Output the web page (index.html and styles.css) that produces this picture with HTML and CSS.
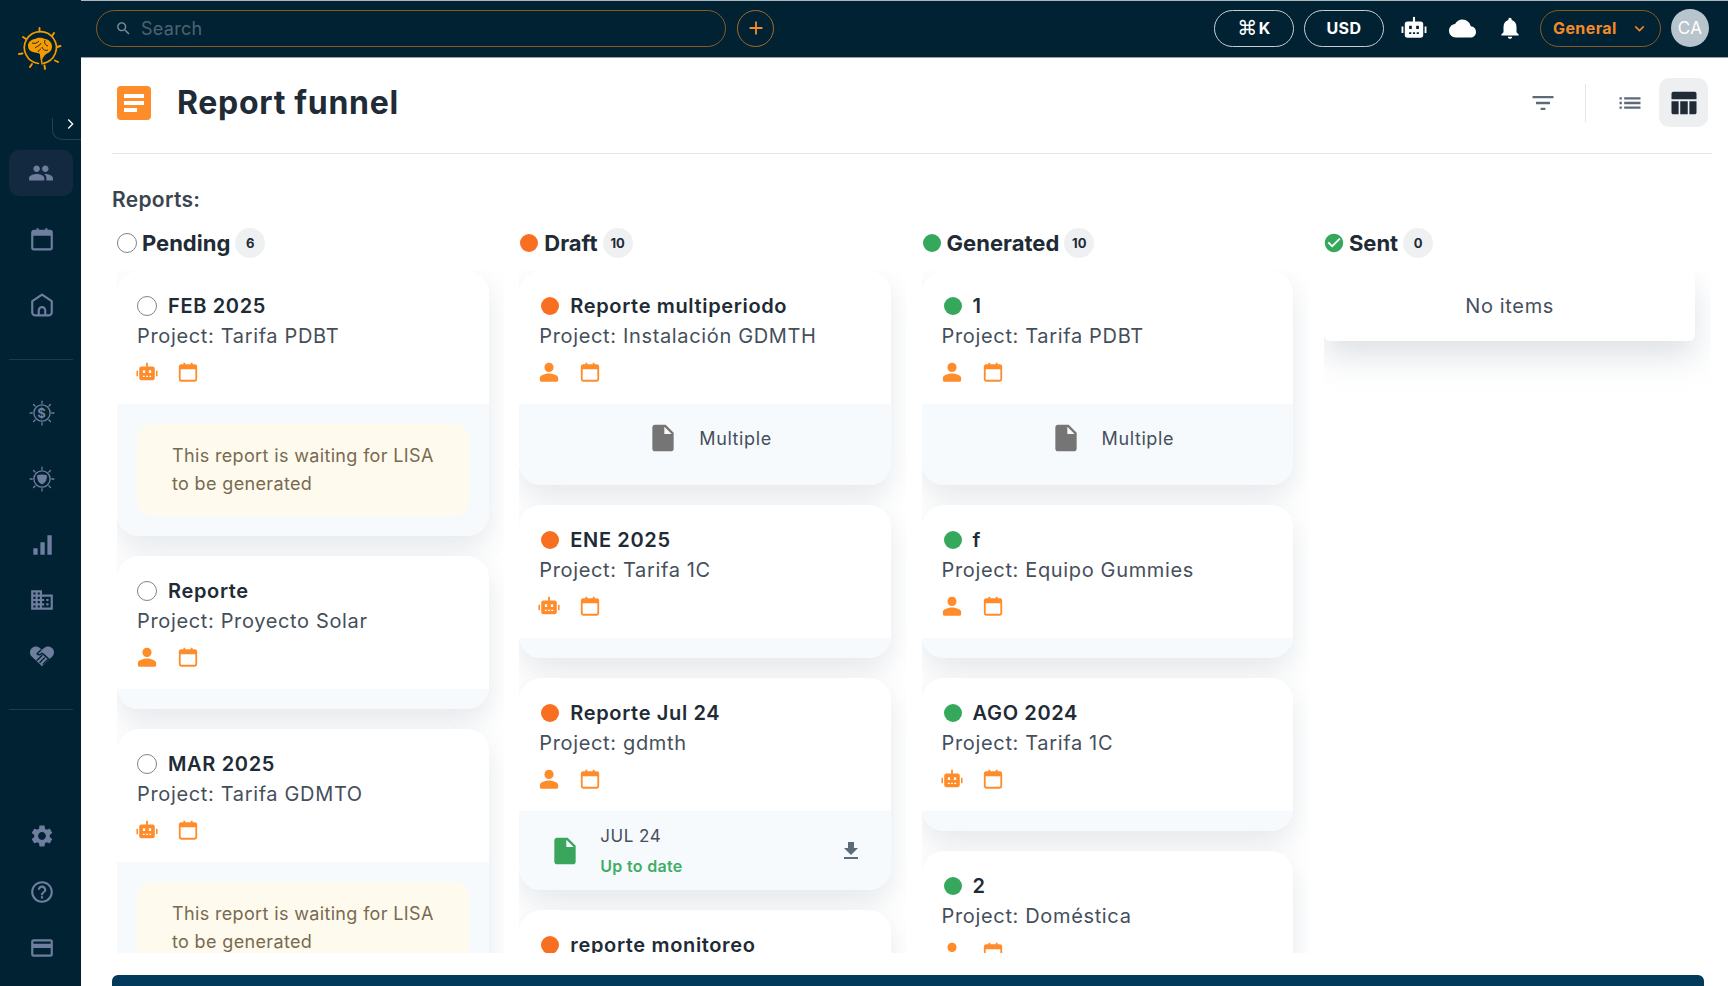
FILE: index.html
```html
<!DOCTYPE html>
<html lang="en">
<head>
<meta charset="utf-8">
<title>Report funnel</title>
<link rel="stylesheet" href="styles.css">
</head>
<body>
<svg class="defs" width="0" height="0" aria-hidden="true">
  <symbol id="i-people" viewBox="0 0 24 24"><path d="M16 11c1.66 0 2.99-1.34 2.99-3S17.66 5 16 5c-1.66 0-3 1.34-3 3s1.34 3 3 3zm-8 0c1.66 0 2.99-1.34 2.99-3S9.66 5 8 5C6.34 5 5 6.34 5 8s1.34 3 3 3zm0 2c-2.33 0-7 1.17-7 3.5V19h14v-2.5c0-2.33-4.67-3.5-7-3.5zm8 0c-.29 0-.62.02-.97.05 1.16.84 1.97 1.97 1.97 3.45V19h6v-2.5c0-2.33-4.67-3.5-7-3.5z"/></symbol>
  <symbol id="i-cal" viewBox="0 0 24 24"><path fill="none" stroke="currentColor" stroke-width="2" d="M4.500 4.500h15a1.500 1.500 0 0 1 1.500 1.500v14a1.500 1.500 0 0 1-1.500 1.500h-15A1.500 1.500 0 0 1 3 20V6a1.500 1.500 0 0 1 1.500-1.500z"/><path d="M3 5h18v4H3zM7 2h2v3H7zM15 2h2v3h-2z"/></symbol>
  <symbol id="i-home" viewBox="0 0 24 24"><path fill="none" stroke="currentColor" stroke-width="2" stroke-linejoin="round" d="M12 2.500 3 8.500V19a2.500 2.500 0 0 0 2.500 2.500h13A2.500 2.500 0 0 0 21 19V8.500zM9 21.500V17a3 3 0 0 1 6 0v4.500"/></symbol>
  <symbol id="i-bars" viewBox="0 0 24 24"><path d="M4 15h4v6H4zM10.500 9.500h4V21h-4zM17 3h4v18h-4z"/></symbol>
  <symbol id="i-domain" viewBox="0 0 24 24"><path d="M12 7V3H2v18h20V7H12zM6 19H4v-2h2v2zm0-4H4v-2h2v2zm0-4H4V9h2v2zm0-4H4V5h2v2zm4 12H8v-2h2v2zm0-4H8v-2h2v2zm0-4H8V9h2v2zm0-4H8V5h2v2zm10 12h-8v-2h2v-2h-2v-2h2v-2h-2V9h8v10zm-2-8h-2v2h2v-2zm0 4h-2v2h2v-2z"/></symbol>
  <symbol id="i-hands" viewBox="0 0 24 24"><path d="M12 21.500 2.500 12.500c-2.200-2.300-2-5.600 0-7.600 2.200-2.200 5.700-2.200 7.800 0L12 6.300l1.700-1.400c2.100-2.200 5.600-2.200 7.800 0 2 2 2.200 5.300 0 7.600z"/><path fill="none" stroke="#012233" stroke-width="1.300" stroke-linecap="round" d="M11 6.500 7.500 10c1.500 1.500 3 1 4.500-.5l2 1.500 5 4.500M12 11.500l-4.500 4.500M14.500 13.500 10 18M17 15.500 13 19.500"/></symbol>
  <symbol id="i-gear" viewBox="0 0 24 24"><path d="M19.140 12.940c.04-.3.06-.61.06-.94 0-.32-.02-.64-.07-.94l2.030-1.580c.18-.14.23-.41.12-.61l-1.920-3.320c-.12-.22-.37-.29-.59-.22l-2.390.96c-.5-.38-1.030-.7-1.620-.94l-.36-2.540c-.04-.24-.24-.41-.48-.41h-3.840c-.24 0-.43.17-.47.41l-.36 2.540c-.59.24-1.130.57-1.620.94l-2.390-.96c-.22-.08-.47 0-.59.22L2.740 8.870c-.12.21-.08.47.12.61l2.030 1.580c-.05.3-.09.63-.09.94s.02.64.07.94l-2.030 1.580c-.18.14-.23.41-.12.61l1.920 3.320c.12.22.37.29.59.22l2.390-.96c.5.38 1.030.7 1.620.94l.36 2.540c.05.24.24.41.48.41h3.840c.24 0 .44-.17.47-.41l.36-2.540c.59-.24 1.130-.56 1.620-.94l2.390.96c.22.08.47 0 .59-.22l1.920-3.320c.12-.22.07-.47-.12-.61l-2.010-1.580zM12 15.600c-1.980 0-3.600-1.620-3.600-3.600s1.620-3.600 3.600-3.600 3.600 1.620 3.600 3.600-1.620 3.600-3.600 3.600z"/></symbol>
  <symbol id="i-help" viewBox="0 0 24 24"><path d="M11 18h2v-2h-2v2zm1-16C6.480 2 2 6.480 2 12s4.480 10 10 10 10-4.480 10-10S17.520 2 12 2zm0 18c-4.410 0-8-3.590-8-8s3.590-8 8-8 8 3.590 8 8-3.590 8-8 8zm0-14c-2.210 0-4 1.790-4 4h2c0-1.100.9-2 2-2s2 .9 2 2c0 2-3 1.750-3 5h2c0-2.250 3-2.500 3-5 0-2.210-1.790-4-4-4z"/></symbol>
  <symbol id="i-card" viewBox="0 0 24 24"><path d="M20 4H4c-1.110 0-1.990.89-1.990 2L2 18c0 1.110.89 2 2 2h16c1.110 0 2-.89 2-2V6c0-1.110-.89-2-2-2zm0 14H4v-6h16v6zm0-10H4V6h16v2z"/></symbol>
  <symbol id="i-robot" viewBox="0 0 24 24"><path fill-rule="evenodd" d="M11 2.500a1 1 0 0 1 2 0V6h5a2.500 2.500 0 0 1 2.500 2.500v10A2.500 2.500 0 0 1 18 21H6a2.500 2.500 0 0 1-2.500-2.500v-10A2.500 2.500 0 0 1 6 6h5zM7.500 10v3h2.500v-3zm6.500 0v3h2.500v-3zM7.500 16v1.500h2V16zm3.500 0v1.500h2V16zm3.500 0v1.500h2V16z"/><path d="M.5 10.500H2.200v6H.5zM21.800 10.500h1.700v6h-1.700z"/></symbol>
  <symbol id="i-cloud" viewBox="0 0 24 24"><path d="M19.350 10.040C18.670 6.590 15.640 4 12 4 9.110 4 6.600 5.640 5.350 8.040 2.340 8.360 0 10.910 0 14c0 3.310 2.690 6 6 6h13c2.760 0 5-2.240 5-5 0-2.640-2.050-4.780-4.650-4.960z"/></symbol>
  <symbol id="i-bell" viewBox="0 0 24 24"><path d="M12 22c1.100 0 2-.9 2-2h-4c0 1.100.89 2 2 2zm6-6v-5c0-3.070-1.640-5.640-4.500-6.320V4c0-.83-.67-1.500-1.500-1.500s-1.500.67-1.500 1.500v.68C7.630 5.360 6 7.920 6 11v5l-2 2v1h16v-1l-2-2z"/></symbol>
  <symbol id="i-search" viewBox="0 0 24 24"><path d="M15.500 14h-.79l-.28-.27C15.410 12.590 16 11.110 16 9.500 16 5.910 13.090 3 9.500 3S3 5.910 3 9.500 5.910 16 9.500 16c1.610 0 3.090-.59 4.230-1.570l.27.28v.79l5 4.990L20.490 19l-4.990-5zm-6 0C7.010 14 5 11.990 5 9.500S7.010 5 9.500 5 14 7.010 14 9.500 11.990 14 9.500 14z"/></symbol>
  <symbol id="i-filter" viewBox="0 0 24 24"><path d="M10 18h4v-2h-4v2zM3 6v2h18V6H3zm3 7h12v-2H6v2z"/></symbol>
  <symbol id="i-list" viewBox="0 0 24 24"><path d="M3 13h2v-2H3v2zm0 4h2v-2H3v2zm0-8h2V7H3v2zm4 4h14v-2H7v2zm0 4h14v-2H7v2zM7 7v2h14V7H7z"/></symbol>
  <symbol id="i-table" viewBox="0 0 24 24"><path d="M2 4.500A1.500 1.500 0 0 1 3.500 3h17A1.500 1.500 0 0 1 22 4.500V9H2zM2 10.500h5.700V21H3.500A1.500 1.500 0 0 1 2 19.500zM9 10.500h6V21H9zM16.300 10.500H22v9a1.500 1.500 0 0 1-1.500 1.500h-4.200z"/></symbol>
  <symbol id="i-person" viewBox="0 0 24 24"><path d="M12 12c2.800 0 5-2.200 5-5s-2.200-5-5-5-5 2.200-5 5 2.200 5 5 5zm0 1.500c-3.500 0-10 1.700-10 5V21a1.500 1.500 0 0 0 1.500 1.500h17A1.500 1.500 0 0 0 22 21v-2.500c0-3.300-6.500-5-10-5z"/></symbol>
  <symbol id="i-doc" viewBox="0 0 24 24"><path d="M6 2c-1.100 0-1.990.9-1.990 2L4 20c0 1.100.89 2 1.990 2H18c1.100 0 2-.9 2-2V8l-6-6H6zm7 7V3.500L18.500 9H13z"/></symbol>
  <symbol id="i-download" viewBox="0 0 24 24"><path d="M19 9h-4V3H9v6H5l7 7 7-7zM5 18v2h14v-2H5z"/></symbol>
  <symbol id="i-check" viewBox="0 0 24 24"><path d="M12 2C6.480 2 2 6.480 2 12s4.480 10 10 10 10-4.480 10-10S17.520 2 12 2zm-2 15l-5-5 1.410-1.410L10 14.170l7.590-7.590L19 8l-9 9z"/></symbol>
  <symbol id="i-rays" viewBox="0 0 24 24"><g fill="none" stroke="currentColor" stroke-width="1.200" stroke-linecap="round"><circle cx="12" cy="12" r="7.500"/><path d="M12 1v2M19.800 4.200l-1.400 1.400M23 12h-2M19.800 19.800l-1.400-1.400M12 23v-2M4.200 19.800l1.400-1.400M1 12h2M4.200 4.200l1.400 1.400"/></g></symbol>
</svg>

<div class="app">
  <aside class="sidebar">
    <div class="logo-box">
      <svg class="logo" viewBox="0 0 44 44">
        <g fill="none" stroke="#f59a00" stroke-linecap="round">
          <path stroke-width="1.700" d="M20.500 37.500A16 16 0 1 1 25.500 37.300"/>
          <path stroke-width="1.900" d="M21.500 2v3.500M36 7l-2 3M42.500 20l-3.500 1M40 36l-3-1.500M27 43l-.5-3.500M12 41l2-3M1 28l3.500-.5M5 11l3 2"/>
          <path stroke-width="1.500" d="M24 38l-1.500-12"/>
        </g>
        <path fill="#f59a00" d="M10 20c0-4 3-6.500 7-7 3-2 7-1.500 10 0 4 .5 7 3.500 7 7.500 0 3-1.500 5.500-4 6.500-2 1-3.500 2-5 5l-2 3-1-7c-2-1.500-5-1-7-2-3-.5-5-3-5-6z"/>
        <path fill="none" stroke="#012233" stroke-width=".9" d="M14 17c3 1 5 0 7-2M17 22c2-2 5-2 6-5M27 14c-1 3 0 5 3 6M24 21c1 3 3 4 6 3M20 26c1-2 2-3 3-3"/>
      </svg>
    </div>
    <button class="toggle" type="button" aria-label="Expand"><svg viewBox="0 0 24 24"><path d="M8.600 6 10 4.600 17.400 12 10 19.400 8.600 18l6-6z"/></svg></button>
    <nav class="nav">
      <a class="nav-item active"><span class="nav-pill"><svg class="nav-icon"><use href="#i-people"/></svg></span></a>
      <a class="nav-item"><svg class="nav-icon"><use href="#i-cal"/></svg></a>
      <a class="nav-item"><svg class="nav-icon"><use href="#i-home"/></svg></a>
    </nav>
    <hr class="nav-rule nav-rule-first">
    <nav class="nav">
      <a class="nav-item">
        <span class="ray-icon"><svg class="nav-icon"><use href="#i-rays"/></svg><span class="ray-dollar">$</span></span>
      </a>
      <a class="nav-item">
        <span class="ray-icon"><svg class="nav-icon" viewBox="0 0 24 24"><use href="#i-rays" width="24" height="24"/><path fill="currentColor" d="M7.500 8.500q4.500-1.500 9 0 .5 6-4.500 8.500-5-2.500-4.500-8.500z"/></svg></span>
      </a>
      <a class="nav-item"><svg class="nav-icon"><use href="#i-bars"/></svg></a>
      <a class="nav-item nav-item-tight"><svg class="nav-icon"><use href="#i-domain"/></svg></a>
      <a class="nav-item nav-item-hands"><svg class="nav-icon"><use href="#i-hands"/></svg></a>
    </nav>
    <hr class="nav-rule nav-rule-second">
    <nav class="nav nav-bottom">
      <a class="nav-item nav-item-foot"><svg class="nav-icon"><use href="#i-gear"/></svg></a>
      <a class="nav-item nav-item-foot"><svg class="nav-icon"><use href="#i-help"/></svg></a>
      <a class="nav-item nav-item-foot"><svg class="nav-icon"><use href="#i-card"/></svg></a>
    </nav>
  </aside>

  <div class="content">
    <header class="topbar">
      <label class="search">
        <svg class="search-icon"><use href="#i-search"/></svg>
        <span class="search-text">Search</span>
      </label>
      <button class="add" type="button" aria-label="Add"><svg viewBox="0 0 24 24"><path d="M11 5h2v6h6v2h-6v6h-2v-6H5v-2h6z"/></svg></button>
      <div class="topbar-right">
        <button class="pill pill-k" type="button"><span class="cmd">⌘</span>K</button>
        <button class="pill" type="button">USD</button>
        <span class="top-icon top-icon-first"><svg><use href="#i-robot"/></svg></span>
        <span class="top-icon"><svg class="icon-cloud"><use href="#i-cloud"/></svg></span>
        <span class="top-icon"><svg><use href="#i-bell"/></svg></span>
        <button class="scope" type="button">General<svg viewBox="0 0 24 24"><path d="M6 9l6 6 6-6" fill="none" stroke="currentColor" stroke-width="2"/></svg></button>
        <span class="avatar">CA</span>
      </div>
    </header>

    <main class="main">
      <div class="page-head">
        <div class="page-title">
          <span class="page-icon"><i></i><i></i><i class="short"></i></span>
          <h1>Report funnel</h1>
        </div>
        <div class="tools">
          <svg class="tool-icon"><use href="#i-filter"/></svg>
          <span class="tool-rule"></span>
          <svg class="tool-icon tool-list"><use href="#i-list"/></svg>
          <span class="tool-active"><svg><use href="#i-table"/></svg></span>
        </div>
      </div>

      <h2 class="reports">Reports:</h2>

      <div class="board">
        <section class="column">
          <div class="col-head"><span class="ring"></span><h3>Pending</h3><span class="count">6</span></div>
          <div class="col-list">
            <article class="card">
              <div class="card-body">
                <div class="card-title"><span class="ring small"></span>FEB 2025</div>
                <p class="project">Project: Tarifa PDBT</p>
                <div class="meta"><svg class="m-first"><use href="#i-robot"/></svg><svg class="m-cal"><use href="#i-cal"/></svg></div>
              </div>
              <div class="card-foot foot-note"><p class="note">This report is waiting for LISA to be generated</p></div>
            </article>
            <article class="card">
              <div class="card-body">
                <div class="card-title"><span class="ring small"></span>Reporte</div>
                <p class="project">Project: Proyecto Solar</p>
                <div class="meta"><svg class="m-first"><use href="#i-person"/></svg><svg class="m-cal"><use href="#i-cal"/></svg></div>
              </div>
              <div class="card-foot foot-empty"></div>
            </article>
            <article class="card">
              <div class="card-body">
                <div class="card-title"><span class="ring small"></span>MAR 2025</div>
                <p class="project">Project: Tarifa GDMTO</p>
                <div class="meta"><svg class="m-first"><use href="#i-robot"/></svg><svg class="m-cal"><use href="#i-cal"/></svg></div>
              </div>
              <div class="card-foot foot-note"><p class="note">This report is waiting for LISA to be generated</p></div>
            </article>
          </div>
        </section>

        <section class="column">
          <div class="col-head"><span class="dot dot-orange"></span><h3>Draft</h3><span class="count">10</span></div>
          <div class="col-list">
            <article class="card">
              <div class="card-body">
                <div class="card-title"><span class="dot dot-orange small"></span>Reporte multiperiodo</div>
                <p class="project">Project: Instalación GDMTH</p>
                <div class="meta"><svg class="m-first"><use href="#i-person"/></svg><svg class="m-cal"><use href="#i-cal"/></svg></div>
              </div>
              <div class="card-foot foot-multi"><svg><use href="#i-doc"/></svg><span>Multiple</span></div>
            </article>
            <article class="card">
              <div class="card-body">
                <div class="card-title"><span class="dot dot-orange small"></span>ENE 2025</div>
                <p class="project">Project: Tarifa 1C</p>
                <div class="meta"><svg class="m-first"><use href="#i-robot"/></svg><svg class="m-cal"><use href="#i-cal"/></svg></div>
              </div>
              <div class="card-foot foot-empty"></div>
            </article>
            <article class="card">
              <div class="card-body">
                <div class="card-title"><span class="dot dot-orange small"></span>Reporte Jul 24</div>
                <p class="project">Project: gdmth</p>
                <div class="meta"><svg class="m-first"><use href="#i-person"/></svg><svg class="m-cal"><use href="#i-cal"/></svg></div>
              </div>
              <div class="card-foot foot-file">
                <svg class="file-icon"><use href="#i-doc"/></svg>
                <div class="file-text"><span class="file-name">JUL 24</span><span class="file-state">Up to date</span></div>
                <svg class="file-get"><use href="#i-download"/></svg>
              </div>
            </article>
            <article class="card">
              <div class="card-body">
                <div class="card-title"><span class="dot dot-orange small"></span>reporte monitoreo</div>
              </div>
            </article>
          </div>
        </section>

        <section class="column">
          <div class="col-head"><span class="dot dot-green"></span><h3>Generated</h3><span class="count">10</span></div>
          <div class="col-list">
            <article class="card">
              <div class="card-body">
                <div class="card-title"><span class="dot dot-green small"></span>1</div>
                <p class="project">Project: Tarifa PDBT</p>
                <div class="meta"><svg class="m-first"><use href="#i-person"/></svg><svg class="m-cal"><use href="#i-cal"/></svg></div>
              </div>
              <div class="card-foot foot-multi"><svg><use href="#i-doc"/></svg><span>Multiple</span></div>
            </article>
            <article class="card">
              <div class="card-body">
                <div class="card-title"><span class="dot dot-green small"></span>f</div>
                <p class="project">Project: Equipo Gummies</p>
                <div class="meta"><svg class="m-first"><use href="#i-person"/></svg><svg class="m-cal"><use href="#i-cal"/></svg></div>
              </div>
              <div class="card-foot foot-empty"></div>
            </article>
            <article class="card">
              <div class="card-body">
                <div class="card-title"><span class="dot dot-green small"></span>AGO 2024</div>
                <p class="project">Project: Tarifa 1C</p>
                <div class="meta"><svg class="m-first"><use href="#i-robot"/></svg><svg class="m-cal"><use href="#i-cal"/></svg></div>
              </div>
              <div class="card-foot foot-empty"></div>
            </article>
            <article class="card">
              <div class="card-body">
                <div class="card-title"><span class="dot dot-green small"></span>2</div>
                <p class="project">Project: Doméstica</p>
                <div class="meta"><svg class="m-first"><use href="#i-person"/></svg><svg class="m-cal"><use href="#i-cal"/></svg></div>
              </div>
            </article>
          </div>
        </section>

        <section class="column">
          <div class="col-head"><svg class="col-check"><use href="#i-check"/></svg><h3>Sent</h3><span class="count">0</span></div>
          <div class="col-list">
            <div class="empty">No items</div>
          </div>
        </section>
      </div>

      <div class="scrollbar"></div>
    </main>
  </div>
</div>
</body>
</html>
```

FILE: styles.css
```css
* { box-sizing: border-box; }
html, body { margin: 0; height: 100%; overflow: hidden; }
body { font-family: Inter, "Noto Sans", sans-serif; color: #212b36; background: #fff; }
h1, h2, h3, p { margin: 0; }
button { font: inherit; background: none; padding: 0; cursor: pointer; }
svg { fill: currentColor; display: block; }
.defs { position: absolute; }

.app { display: flex; height: 986px; }

/* Sidebar */
.sidebar { width: 81px; flex: none; background: #012233; color: #6f7e9e; display: flex; flex-direction: column; }
.logo-box { height: 118px; padding: 26px 0 0 18px; }
.logo { width: 44px; height: 44px; }
.toggle { display: flex; align-items: flex-start; justify-content: center; align-self: flex-end; width: 29px; height: 22px; padding: 0 0 0 6px; border: 0; border-left: 1px solid #25404f; border-bottom: 1px solid #25404f; border-bottom-left-radius: 10px; color: #fff; flex: none; }
.toggle svg { width: 16px; height: 16px; margin-top: -2px; }
.nav { display: flex; flex-direction: column; }
.nav-item { height: 66px; display: flex; align-items: center; justify-content: center; padding-left: 2px; }
.nav-pill { width: 64px; height: 46px; display: flex; align-items: center; justify-content: center; background: #12293f; border-radius: 10px; margin-left: -1px; }
.nav-icon { width: 26px; height: 26px; }
.nav-item-tight { height: 44px; }
.nav-item-hands { height: 68px; }
.nav-item-foot { height: 56px; }
.nav-rule { width: 64px; height: 1px; margin: 21px 0 0 9px; border: 0; background: #1f3a4a; flex: none; }
.nav-rule-first { margin-bottom: 20px; }
.nav-rule-second { margin-top: 19px; }
.nav-bottom { margin-top: auto; padding-bottom: 10px; }
.ray-icon { position: relative; display: block; }
.ray-dollar { position: absolute; inset: 0; display: flex; align-items: center; justify-content: center; font-size: 13px; font-weight: 700; }

/* Top bar */
.content { flex: 1; min-width: 0; display: flex; flex-direction: column; }
.topbar { height: 58px; flex: none; background: #012233; border-top: 1px solid #a9b7bf; border-bottom: 1px solid #8fa0aa; display: flex; align-items: center; padding: 0 19px 2px 15px; }
.search { width: 630px; height: 37px; border: 1px solid #8a5a24; border-radius: 19px; display: flex; align-items: center; padding-left: 18px; color: #4c6372; }
.search-icon { width: 17px; height: 17px; color: #7c8c98; }
.search-text { margin-left: 9px; font-size: 18px; letter-spacing: .3px; }
.add { width: 37px; height: 37px; margin-left: 11px; border: 1px solid #a66a24; border-radius: 50%; color: #f5892a; display: flex; align-items: center; justify-content: center; }
.add svg { width: 22px; height: 22px; }
.topbar-right { margin-left: auto; display: flex; align-items: center; color: #fff; }
.pill { width: 80px; height: 37px; border: 1px solid #c6ced3; border-radius: 19px; color: #fff; font-weight: 700; font-size: 16px; letter-spacing: .5px; display: flex; align-items: center; justify-content: center; }
.pill-k { margin-right: 10px; }
.cmd { font-family: "DejaVu Sans", sans-serif; font-size: 20px; font-weight: 400; margin-right: 1px; }
.top-icon { width: 48px; display: flex; justify-content: center; }
.top-icon svg { width: 26px; height: 26px; }
.top-icon .icon-cloud { width: 27px; height: 27px; }
.top-icon-first { margin-left: 6px; }
.scope { width: 121px; height: 37px; margin: 0 10px 0 6px; border: 1px solid #8a5a24; border-radius: 19px; color: #f5892a; font-size: 16px; font-weight: 700; letter-spacing: .4px; display: flex; align-items: center; justify-content: space-between; padding: 0 12px; }
.scope svg { width: 17px; height: 17px; }
.avatar { width: 38px; height: 38px; border-radius: 50%; background: #b8c4cb; color: #fff; font-size: 17px; display: flex; align-items: center; justify-content: center; letter-spacing: .4px; }

/* Main */
.main { flex: 1; min-height: 0; background: #fff; padding: 0 16px 0 31px; display: flex; flex-direction: column; }
.page-head { height: 96px; flex: none; border-bottom: 1px solid #e6e8eb; display: flex; align-items: center; justify-content: space-between; padding: 0 4px 6px 5px; }
.page-title { display: flex; align-items: center; }
.page-icon { width: 34px; height: 34px; background: #ff8c2b; border-radius: 4px; padding: 8px 7px; display: flex; flex-direction: column; justify-content: space-between; }
.page-icon i { display: block; height: 4px; background: #fff; }
.page-icon i.short { width: 13px; }
h1 { margin-left: 26px; font-size: 32px; font-weight: 700; letter-spacing: .7px; }
.tools { display: flex; align-items: center; color: #5c6b7a; }
.tool-icon { width: 28px; height: 28px; }
.tool-rule { width: 1px; height: 38px; background: #e1e4e8; margin: 0 30px 0 28px; }
.tool-list { margin-right: 15px; }
.tool-active { width: 49px; height: 49px; background: #edeff1; border-radius: 10px; color: #212b36; display: flex; align-items: center; justify-content: center; }
.tool-active svg { width: 30px; height: 30px; }
.reports { margin-top: 31px; height: 29px; line-height: 30px; font-size: 21px; font-weight: 600; letter-spacing: .3px; color: #3a4450; }

/* Board */
.board { display: flex; gap: 15.3px; padding-left: 5px; margin-top: 14px; flex: none; }
.column { width: 387px; flex: none; }
.col-head { height: 30px; display: flex; align-items: center; }
.col-head h3 { font-size: 22px; font-weight: 700; margin-left: 5px; }
.count { width: 30px; height: 30px; border-radius: 50%; background: #eef0f2; font-size: 13px; font-weight: 700; display: flex; align-items: center; justify-content: center; margin-left: 5px; }
.col-head .dot { margin-left: 1px; margin-right: 1px; }
.col-check { width: 22px; height: 22px; color: #36a85c; margin-left: -1px; margin-right: -1px; }
.ring { width: 20px; height: 20px; border-radius: 50%; border: 1.5px solid #7e8488; background: #fff; flex: none; display: block; }
.dot { width: 18px; height: 18px; border-radius: 50%; flex: none; display: block; }
.dot-orange { background: #f86f22; }
.dot-green { background: #36a85c; }
.col-list { height: 682px; margin-top: 13px; overflow: hidden; padding-right: 15px; padding-bottom: 40px; }

/* Cards */
.card { width: 371.5px; border-radius: 22px; background: #fff; box-shadow: 0 12px 28px rgba(145, 158, 171, .24); overflow: hidden; margin-bottom: 20px; }
.card-body { height: 133px; padding: 20px 20px 0; }
.card-title { height: 30px; display: flex; align-items: center; font-size: 20px; font-weight: 600; letter-spacing: .65px; }
.card-title .small { margin-right: 11px; }
.card-title .dot.small { margin-left: 2px; margin-right: 11px; }
.project { height: 29px; line-height: 30px; font-size: 20px; color: #454f5b; letter-spacing: .65px; white-space: nowrap; }
.meta { display: flex; align-items: center; color: #ff8c2b; margin-top: 11px; }
.meta svg { width: 22px; height: 22px; }
.meta .m-first { margin-left: -1px; }
.meta .m-cal { margin-left: 19px; }
.card-foot { background: #f7fafd; }
.foot-empty { height: 20px; }
.foot-note { padding: 20px; }
.note { height: 92px; background: #fffaee; border-radius: 14px; padding: 18px 30px 0 35px; font-size: 18px; line-height: 28px; letter-spacing: .35px; color: #776a50; }
.foot-multi { height: 81px; display: flex; align-items: center; color: #454f5b; font-size: 18px; letter-spacing: .6px; gap: 20px; padding: 0 0 13px 128px; }
.foot-multi svg { width: 32px; height: 32px; color: #757575; }
.foot-file { height: 79px; display: flex; align-items: center; padding: 0 28px 0 30px; }
.file-icon { width: 32px; height: 32px; color: #3aa65c; flex: none; }
.file-text { display: flex; flex-direction: column; margin-left: 19px; }
.file-name { font-size: 17px; line-height: 24px; color: #454f5b; letter-spacing: .5px; }
.file-state { font-size: 16px; line-height: 24px; margin-top: 6px; font-weight: 600; letter-spacing: .3px; color: #3fae64; }
.file-get { width: 24px; height: 24px; margin-left: auto; color: #5c6b7a; }
.empty { width: 371.5px; height: 70px; background: #fff; border-radius: 6px; box-shadow: 0 16px 32px rgba(145, 158, 171, .3); display: flex; align-items: center; justify-content: center; font-size: 20px; letter-spacing: .65px; color: #454f5b; }
.scrollbar { width: 1592px; height: 11px; margin-top: 22px; background: #023a5c; border-radius: 6px 6px 0 0; flex: none; }
```
